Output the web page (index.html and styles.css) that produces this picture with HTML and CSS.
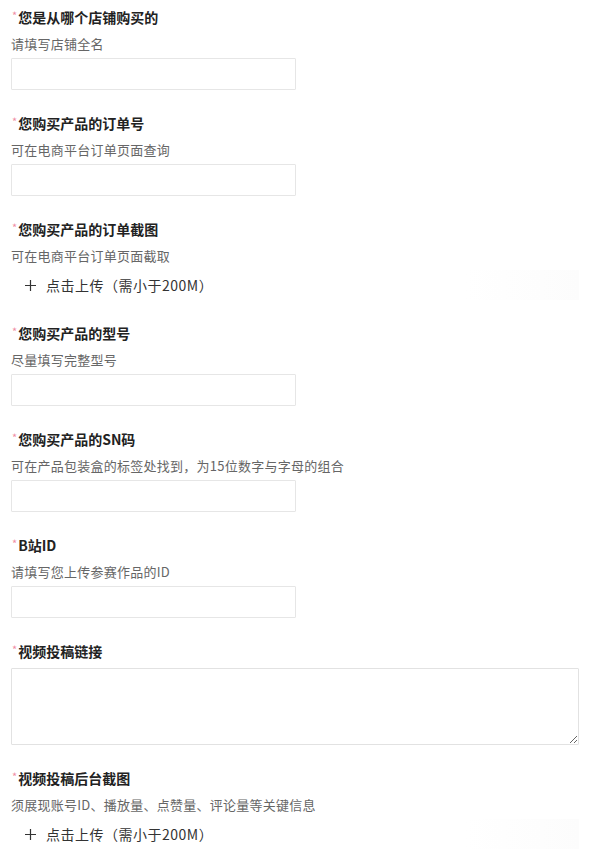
FILE: index.html
```html
<!DOCTYPE html>
<html lang="zh">
<head>
<meta charset="utf-8">
<link rel="stylesheet" href="styles.css">
</head>
<body>
<form class="form">
  <div class="field">
    <div class="label"><span class="req">*</span>您是从哪个店铺购买的</div>
    <div class="help">请填写店铺全名</div>
    <input class="input" type="text">
  </div>
  <div class="field">
    <div class="label"><span class="req">*</span>您购买产品的订单号</div>
    <div class="help">可在电商平台订单页面查询</div>
    <input class="input" type="text">
  </div>
  <div class="field">
    <div class="label"><span class="req">*</span>您购买产品的订单截图</div>
    <div class="help">可在电商平台订单页面截取</div>
    <div class="upload"><svg class="plus" width="11" height="11" viewBox="0 0 11 11"><path d="M5.5 0V11M0 5.5H11" stroke="#333" stroke-width="1.2" fill="none"/></svg>点击上传（需小于200M）</div>
  </div>
  <div class="field">
    <div class="label"><span class="req">*</span>您购买产品的型号</div>
    <div class="help">尽量填写完整型号</div>
    <input class="input" type="text">
  </div>
  <div class="field">
    <div class="label"><span class="req">*</span>您购买产品的SN码</div>
    <div class="help">可在产品包装盒的标签处找到，为15位数字与字母的组合</div>
    <input class="input" type="text">
  </div>
  <div class="field">
    <div class="label"><span class="req">*</span>B站ID</div>
    <div class="help">请填写您上传参赛作品的ID</div>
    <input class="input" type="text">
  </div>
  <div class="field">
    <div class="label"><span class="req">*</span>视频投稿链接</div>
    <textarea class="textarea"></textarea>
  </div>
  <div class="field">
    <div class="label"><span class="req">*</span>视频投稿后台截图</div>
    <div class="help">须展现账号ID、播放量、点赞量、评论量等关键信息</div>
    <div class="upload"><svg class="plus" width="11" height="11" viewBox="0 0 11 11"><path d="M5.5 0V11M0 5.5H11" stroke="#333" stroke-width="1.2" fill="none"/></svg>点击上传（需小于200M）</div>
  </div>
</form>
</body>
</html>
```
FILE: styles.css
```css
html, body {
  margin: 0;
  padding: 0;
  background: #fff;
}
body {
  font-family: "Noto Sans CJK SC", "Noto Sans", sans-serif;
  font-size: 13px;
  color: #333;
}
.form {
  padding: 7px 21px 0 11px;
  display: flex;
  flex-direction: column;
}
.field {
  display: flex;
  flex-direction: column;
  align-items: flex-start;
  margin-bottom: 23px;
}
.label {
  font-size: 14px;
  line-height: 20px;
  font-weight: 700;
  color: #222;
  display: flex;
  align-items: flex-start;
}
.req {
  color: #f08ca4;
  font-weight: 400;
  font-size: 11px;
  line-height: 16px;
  margin-right: 1px;
  margin-left: 1px;
}
.help {
  margin-top: 7px;
  font-size: 13px;
  line-height: 20px;
  color: #666;
  letter-spacing: 0.25px;
}
.input {
  box-sizing: border-box;
  margin: 4px 0 0 0;
  width: 285px;
  height: 32px;
  border: 1px solid #e6e6e6;
  border-radius: 1px;
  background: #fff;
  padding: 0 8px;
  font-family: inherit;
}
.textarea {
  box-sizing: border-box;
  margin: 7px 0 0 0;
  width: 568px;
  height: 77px;
  border: 1px solid #e2e2e2;
  border-radius: 1px;
  font-family: inherit;
  resize: vertical;
}
.upload {
  margin-top: 4px;
  height: 30px;
  width: 568px;
  display: flex;
  align-items: center;
  padding-left: 14px;
  box-sizing: border-box;
  font-size: 14px;
  color: #333;
  letter-spacing: 0.5px;
  background: linear-gradient(to right, #fff 80%, #fcfcfc);
}
.plus {
  flex: none;
  margin-right: 10px;
}
```
